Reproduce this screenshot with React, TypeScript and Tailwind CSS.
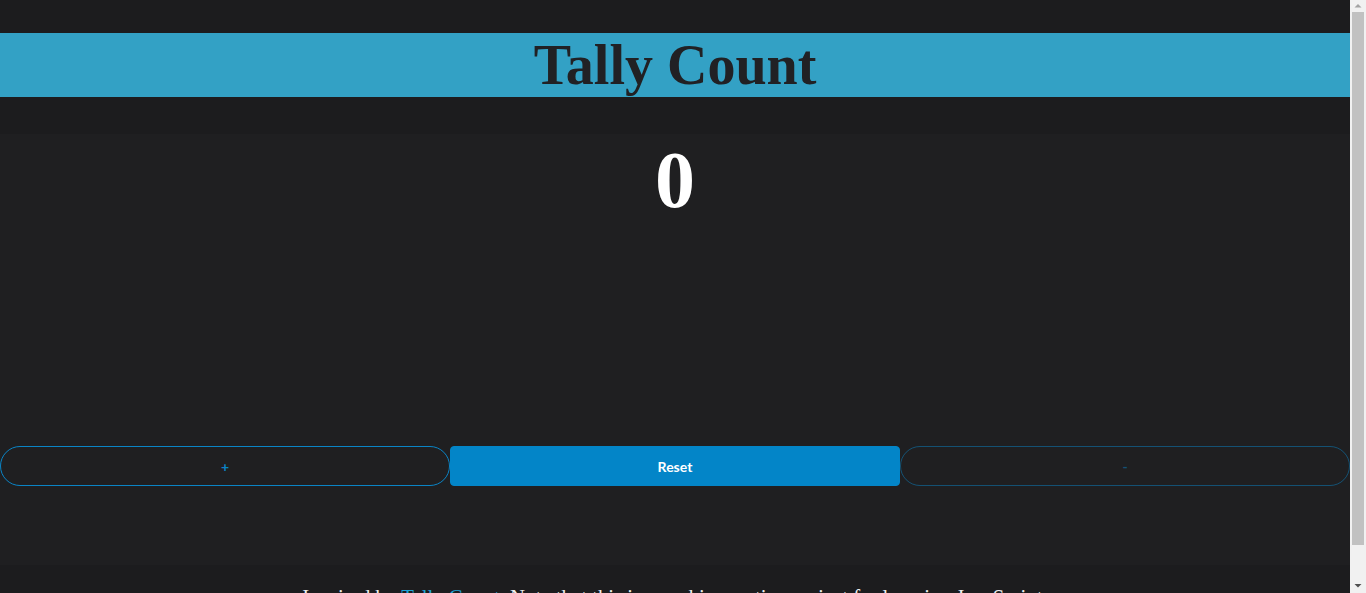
function Scrollbar() {
  return (
    <aside className="flex h-screen w-4 shrink-0 flex-col items-center bg-[#f1f1f1]">
      <svg width="16" height="12" viewBox="0 0 16 12" className="shrink-0">
        <path d="M4.5 7.5 L8 4 L11.5 7.5 Z" fill="#a3a3a3" />
      </svg>
      <div className="h-[533px] w-3 bg-[#c1c1c1]" />
      <div className="flex-1" />
      <svg width="16" height="14" viewBox="0 0 16 14" className="shrink-0">
        <path d="M4.5 5 L8 8.5 L11.5 5 Z" fill="#505050" />
      </svg>
    </aside>
  );
}

export default function App() {
  return (
    <div className="flex h-screen overflow-hidden bg-[#1c1c1e] font-['Liberation_Serif',serif]">
      <div className="min-w-0 flex-1 pt-[33px]">
        <header className="bg-[#33a1c5]">
          <h1 className="text-center text-[56px] font-bold leading-[64px] text-[#212124]">
            Tally Count
          </h1>
        </header>

        <main className="mt-[37px] flex h-[431px] flex-col bg-[#1f1f21]">
          <p className="text-center text-[80px] font-bold leading-[92px] text-white">0</p>

          <div className="mt-[220px] grid grid-cols-3 font-['Lato',sans-serif] text-[14px] font-bold">
            <button className="h-10 rounded-full border border-[#0a84c6] text-[#0a84c6]">+</button>
            <button className="h-10 rounded border border-[#0385c8] bg-[#0385c8] text-white">
              Reset
            </button>
            <button className="h-10 rounded-full border border-[#0a84c6] text-[#0a84c6] opacity-50" disabled>
              -
            </button>
          </div>
        </main>

        <footer className="whitespace-nowrap px-4 pt-4 pb-5 text-center text-[20.8px] text-[#eeeeee]">
          Inspired by{" "}
          <a href="#" className="text-[#1fa3d4]">
            Tally Count
          </a>
          . Note that this is a rookie practice project for learning JavaScript.
        </footer>
      </div>
      <Scrollbar />
    </div>
  );
}
